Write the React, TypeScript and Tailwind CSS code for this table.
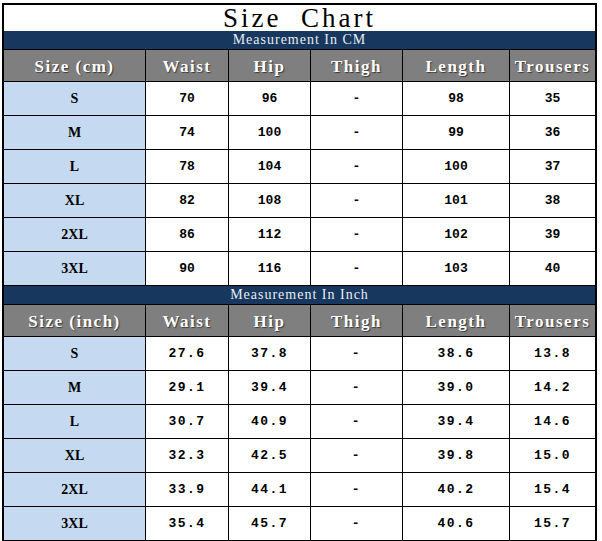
import React from "react";

const cols = ["w-[141px]", "w-[83px]", "w-[82px]", "w-[92px]", "w-[107px]", "w-[86px]"];

const cmRows = [
  ["S", "70", "96", "-", "98", "35"],
  ["M", "74", "100", "-", "99", "36"],
  ["L", "78", "104", "-", "100", "37"],
  ["XL", "82", "108", "-", "101", "38"],
  ["2XL", "86", "112", "-", "102", "39"],
  ["3XL", "90", "116", "-", "103", "40"],
];

const inchRows = [
  ["S", "27.6", "37.8", "-", "38.6", "13.8"],
  ["M", "29.1", "39.4", "-", "39.0", "14.2"],
  ["L", "30.7", "40.9", "-", "39.4", "14.6"],
  ["XL", "32.3", "42.5", "-", "39.8", "15.0"],
  ["2XL", "33.9", "44.1", "-", "40.2", "15.4"],
  ["3XL", "35.4", "45.7", "-", "40.6", "15.7"],
];

const Band = ({ label }: { label: string }) => (
  <div className="flex h-[18px] items-center justify-center bg-[#17375e] font-['Liberation_Serif',serif] text-[14px] leading-none tracking-[1px] text-[#e8edf3]">
    {label}
  </div>
);

const HeaderRow = ({ first }: { first: string }) => {
  const labels = [first, "Waist", "Hip", "Thigh", "Length", "Trousers"];
  return (
    <div className="flex h-[32px] border-t border-black bg-[#7f7f7f]">
      {labels.map((l, i) => (
        <div
          key={i}
          className={`${cols[i]} ${i > 0 ? "border-l border-black" : ""} flex items-center justify-center pt-[3px] font-['Liberation_Serif',serif] text-[17px] font-bold tracking-[1.5px] whitespace-pre text-white [text-shadow:1px_1px_1px_#3a3a3a]`}
        >
          {l}
        </div>
      ))}
    </div>
  );
};

const DataRow = ({ row, spaced }: { row: string[]; spaced?: boolean }) => (
  <div className="flex h-[34px] border-t border-black">
    {row.map((v, i) => (
      <div
        key={i}
        className={`${cols[i]} ${
          i > 0
            ? "border-l border-black bg-white font-['Liberation_Mono',monospace] text-[13px]"
            : "bg-[#c5d9f1] font-['Liberation_Serif',serif] text-[14px]"
        } flex items-center justify-center font-bold text-black ${spaced && i > 0 ? "tracking-[1.5px]" : ""}`}
      >
        {v}
      </div>
    ))}
  </div>
);

export default function App() {
  return (
    <div className="h-[541px] w-[602px] bg-white">
      <div className="ml-[2px] w-[595px] pt-[3px]">
        <div className="border-2 border-black">
          <div className="flex h-[26px] items-center justify-center whitespace-pre font-['Liberation_Serif',serif] text-[27px] leading-none tracking-[3px] text-black">
            {"Size  Chart"}
          </div>
          <Band label="Measurement In CM" />
          <HeaderRow first="Size (cm)" />
          {cmRows.map((r) => (
            <DataRow key={r[0]} row={r} />
          ))}
          <div className="border-t border-black">
            <Band label="Measurement In Inch" />
          </div>
          <HeaderRow first="Size (inch)" />
          {inchRows.map((r) => (
            <DataRow key={r[0]} row={r} spaced />
          ))}
        </div>
      </div>
    </div>
  );
}
